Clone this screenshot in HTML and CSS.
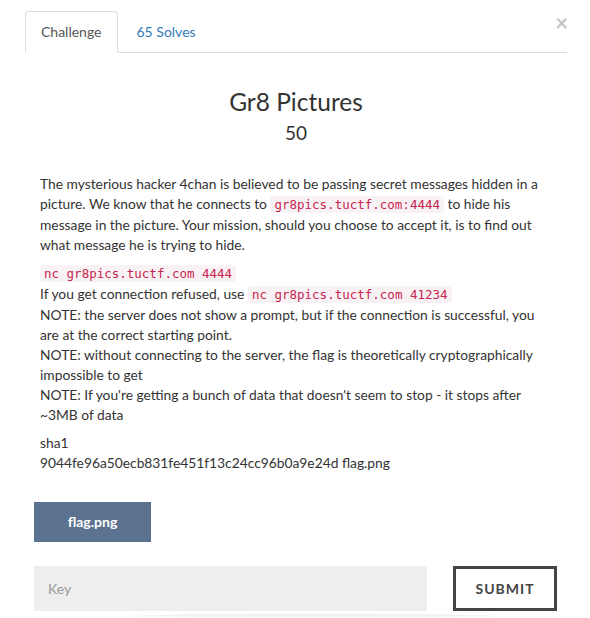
FILE: index.html
```html
<!DOCTYPE html>
<html>
<head>
<meta charset="utf-8">
<link rel="stylesheet" href="styles.css">
</head>
<body>
<div class="modal">
  <button class="close" aria-label="Close">&times;</button>
  <ul class="tabs">
    <li class="tab active">Challenge</li>
    <li class="tab"><a href="#">65 Solves</a></li>
  </ul>
  <div class="content">
    <h3 class="title">Gr8 Pictures</h3>
    <h4 class="value">50</h4>
    <div class="desc">
      <p>The mysterious hacker 4chan is believed to be passing secret messages hidden in a picture. We know that he connects to <code>gr8pics.tuctf.com:4444</code> to hide his message in the picture. Your mission, should you choose to accept it, is to find out what message he is trying to hide.</p>
      <p><code>nc gr8pics.tuctf.com 4444</code><br>If you get connection refused, use <code>nc gr8pics.tuctf.com 41234</code><br>NOTE: the server does not show a prompt, but if the connection is successful, you are at the correct starting point.<br>NOTE: without connecting to the server, the flag is theoretically cryptographically impossible to get<br>NOTE: If you're getting a bunch of data that doesn't seem to stop - it stops after ~3MB of data</p>
      <p>sha1<br>9044fe96a50ecb831fe451f13c24cc96b0a9e24d flag.png</p>
    </div>
    <div class="files">
      <a class="file-btn" href="#">flag.png</a>
    </div>
    <div class="submit-row">
      <input class="key" type="text" placeholder="Key">
      <button class="submit">SUBMIT</button>
    </div>
  </div>
  <div class="shadow"></div>
</div>
</body>
</html>
```
FILE: styles.css
```css
* { box-sizing: border-box; }
html, body { margin: 0; padding: 0; background: #fff; }
body {
  font-family: Lato, "Open Sans", sans-serif;
  color: #333;
  font-size: 14px;
  width: 590px;
  height: 618px;
  overflow: hidden;
}
.modal {
  position: relative;
  padding: 11px 23px 0 25px;
}
.close {
  position: absolute;
  top: 11px;
  right: 22px;
  border: 0;
  background: none;
  font-family: Lato, sans-serif;
  font-size: 22px;
  font-weight: 700;
  color: #c4c4c4;
  padding: 0;
  line-height: 24px;
}
.tabs {
  list-style: none;
  margin: 0;
  padding: 0;
  display: flex;
  border-bottom: 1px solid #ddd;
  height: 42px;
}
.tab {
  padding: 0 16px 0 18px;
  line-height: 40px;
  height: 42px;
  border: 1px solid transparent;
  border-radius: 4px 4px 0 0;
  color: #555;
  font-size: 14px;
}
.tab.active {
  border-color: #ddd;
  border-bottom-color: #fff;
  background: #fff;
  padding: 0 15px;
}
.tab a {
  color: #337ab7;
  text-decoration: none;
}
.title {
  text-align: center;
  font-weight: 400;
  font-size: 24.5px;
  margin: 35px 0 0 0;
  line-height: 28px;
  color: #333;
}
.value {
  text-align: center;
  font-weight: 400;
  font-size: 19px;
  margin: 6px 0 0 0;
  line-height: 22px;
  color: #333;
}
.desc {
  margin: 30px 0 0 15px;
  width: 505px;
  font-size: 13.8px;
  line-height: 20px;
}
.desc p { margin: 0 0 8px 0; }
code {
  font-family: "DejaVu Sans Mono", monospace;
  font-size: 12.5px;
  color: #c7254e;
  background: #f9f2f4;
  padding: 1px 4px;
  border-radius: 4px;
}
.files {
  margin: 29px 0 0 9px;
}
.file-btn {
  display: inline-block;
  width: 117px;
  height: 40px;
  line-height: 40px;
  text-align: center;
  background: #5b7290;
  color: #fff;
  font-weight: 700;
  font-size: 14px;
  text-decoration: none;
}
.submit-row {
  display: flex;
  gap: 26px;
  margin: 24px 0 0 9px;
  align-items: flex-start;
}
.key {
  width: 393px;
  height: 45px;
  border: 0;
  background: #eee;
  padding: 0 14px;
  font-family: Lato, sans-serif;
  font-size: 14px;
  color: #333;
}
.key::placeholder { color: #999; }
.submit {
  width: 104px;
  height: 45px;
  border: 3px solid #444;
  background: #fff;
  font-family: Lato, sans-serif;
  font-weight: 700;
  font-size: 14px;
  letter-spacing: 1px;
  color: #444;
}
.shadow {
  margin: 3px 0 0 110px;
  width: 360px;
  height: 4px;
  background: linear-gradient(#e9e9e9, #fff);
  border-radius: 50%;
}
```
